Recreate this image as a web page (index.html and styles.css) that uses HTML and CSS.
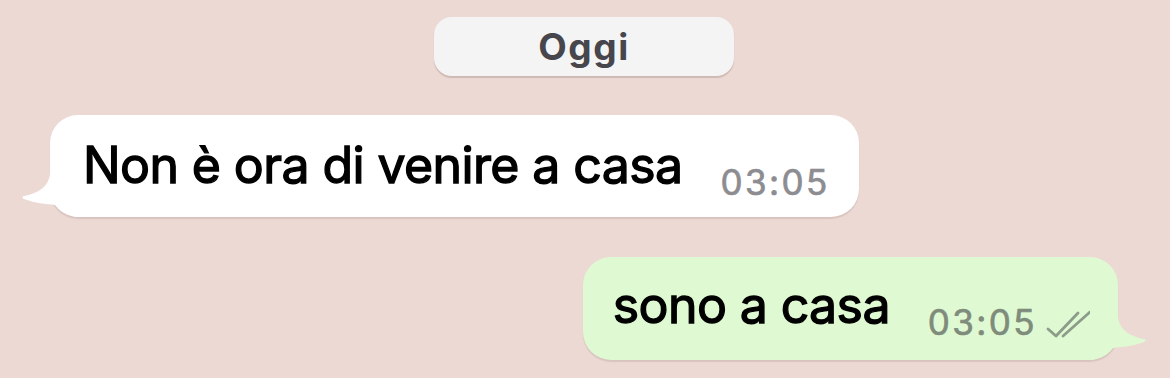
FILE: index.html
```html
<!DOCTYPE html>
<html lang="it">
<head>
<meta charset="utf-8">
<title>Chat</title>
<link rel="stylesheet" href="styles.css">
</head>
<body>
<main class="chat">
  <div class="date"><span>Oggi</span></div>

  <div class="bubble in">
    <svg class="tail" viewBox="0 0 60 60" width="60" height="60" aria-hidden="true">
      <path d="M30 0 L30 12 C30 25 20 33 4 36 C2 36.5 2 38 4 39 C14 43 27 44 35 45 C42 46 45 55 56 57 L58 57 L58 0 Z"/>
    </svg>
    <span class="text">Non è ora di venire a casa</span>
    <span class="meta"><span class="time">03:05</span></span>
  </div>

  <div class="bubble out">
    <svg class="tail" viewBox="0 0 60 60" width="60" height="60" aria-hidden="true">
      <path d="M30 0 L30 12 C30 25 20 33 4 36 C2 36.5 2 38 4 39 C14 43 27 44 35 45 C42 46 45 55 56 57 L58 57 L58 0 Z"/>
    </svg>
    <span class="text">sono a casa</span>
    <span class="meta">
      <span class="time">03:05</span>
      <svg class="ticks" viewBox="0 0 46 28" width="46" height="28" aria-hidden="true">
        <path d="M2 19 L10 26 L32 3" />
        <path d="M17 26 L44 2" />
      </svg>
    </span>
  </div>
</main>
</body>
</html>
```

FILE: styles.css
```css
html, body {
  margin: 0;
  padding: 0;
}

body {
  background: #ecd9d4;
  font-family: "Inter", "Liberation Sans", sans-serif;
  color: #000;
  width: 1170px;
  height: 378px;
  overflow: hidden;
}

.chat {
  display: flex;
  flex-direction: column;
  padding: 17px 52px 0 50px;
}

.date {
  align-self: center;
  width: 300px;
  height: 59px;
  border-radius: 18px;
  background: #f4f4f5;
  box-shadow: 0 2px 1px rgba(120, 90, 85, 0.25);
  display: flex;
  align-items: center;
  justify-content: center;
  color: #46464c;
  font-size: 37px;
  font-weight: 700;
  letter-spacing: 1.6px;
}

.bubble {
  position: relative;
  display: flex;
  align-items: flex-start;
  border-radius: 28px;
  box-sizing: border-box;
}

.bubble .text {
  font-size: 50px;
  line-height: 60px;
  font-weight: 400;
  letter-spacing: -0.6px;
  -webkit-text-stroke: 1.3px #000;
}

.bubble .meta {
  display: flex;
  align-items: flex-end;
  margin-top: 27px;
  margin-left: 38px;
}

.time {
  font-size: 35px;
  line-height: 40px;
  letter-spacing: 2.4px;
  -webkit-text-stroke: 0.7px currentColor;
}

.tail {
  position: absolute;
  bottom: -3px;
}

.in {
  align-self: flex-start;
  margin-top: 39px;
  height: 102px;
  padding: 20px 29px 0 33px;
  background: #ffffff;
  box-shadow: 0 2px 1px rgba(120, 90, 85, 0.16);
}

.in .tail {
  left: -30px;
  fill: #ffffff;
}

.in .time {
  color: #8c8c91;
}

.out {
  align-self: flex-end;
  margin-top: 40px;
  height: 103px;
  padding: 18px 26px 0 30px;
  background: #dffad2;
  box-shadow: 0 2px 1px rgba(120, 90, 85, 0.16);
}

.out .tail {
  right: -30px;
  transform: scaleX(-1);
  fill: #dffad2;
}

.out .time {
  color: #7f8c7c;
}

.ticks {
  margin-left: 9px;
  margin-bottom: 4px;
  fill: none;
  stroke: #8d9c8a;
  stroke-width: 2.8;
  stroke-linecap: round;
  stroke-linejoin: round;
}
```
